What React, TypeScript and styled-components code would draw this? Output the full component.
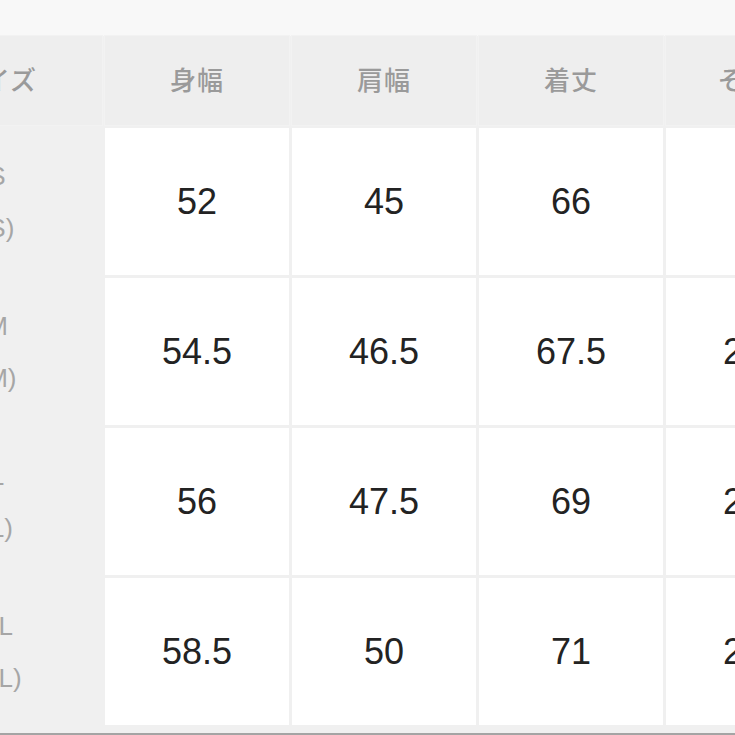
import styled, { createGlobalStyle } from "styled-components";

const GlobalStyle = createGlobalStyle`
  html, body {
    margin: 0;
    padding: 0;
    background: #ffffff;
    overflow: hidden;
  }
  body {
    font-family: "Liberation Sans", "Noto Sans CJK JP", sans-serif;
  }
`;

const columns = ["身幅", "肩幅", "着丈", "そで丈"];

const rows = [
  { size: "S", alt: "(S)", values: ["52", "45", "66", "22"] },
  { size: "M", alt: "(M)", values: ["54.5", "46.5", "67.5", "23.5"] },
  { size: "L", alt: "(L)", values: ["56", "47.5", "69", "24.5"] },
  { size: "XL", alt: "(XL)", values: ["58.5", "50", "71", "25.5"] },
];

const App = () => {
  return (
    <>
      <GlobalStyle />
      <Page>
        <Table>
          <HeadCell>サイズ</HeadCell>
          {columns.map((c) => (
            <HeadCell key={c}>{c}</HeadCell>
          ))}
          {rows.map((r) => (
            <Row key={r.size}>
              <LabelCell>
                <div>{r.size}</div>
                <div>{r.alt}</div>
              </LabelCell>
              {r.values.map((v, i) => (
                <ValueCell key={i}>{v}</ValueCell>
              ))}
            </Row>
          ))}
        </Table>
      </Page>
    </>
  );
};

export default App;

const Page = styled.div`
  width: 735px;
  height: 735px;
  background: #f8f8f8;
  padding-top: 36px;
  box-sizing: border-box;
  overflow: hidden;
`;

const Table = styled.div`
  display: grid;
  grid-template-columns: 210px repeat(4, 184px);
  grid-template-rows: 89px repeat(4, 147px);
  gap: 3px;
  width: max-content;
  margin-left: -108px;
  padding-bottom: 8px;
  background: #f0f0f0;
  border-bottom: 2px solid #a4a4a4;
`;

const Row = styled.div`
  display: contents;
`;

const HeadCell = styled.div`
  display: flex;
  align-items: center;
  justify-content: center;
  padding-bottom: 5px;
  background: #eeeeee;
  color: #9a9a9a;
  font-family: "Noto Sans CJK JP", sans-serif;
  font-size: 26px;
  font-weight: 500;
  letter-spacing: 1px;
  box-shadow: 0 0 0 1px #f2f2f2;
`;

const LabelCell = styled.div`
  display: flex;
  flex-direction: column;
  align-items: center;
  justify-content: center;
  gap: 20px;
  background: #f0f0f0;
  color: #a6a6a6;
  font-size: 26px;
  line-height: 32px;
`;

const ValueCell = styled.div`
  display: flex;
  align-items: center;
  justify-content: center;
  background: #ffffff;
  color: #232323;
  font-size: 36px;
`;
